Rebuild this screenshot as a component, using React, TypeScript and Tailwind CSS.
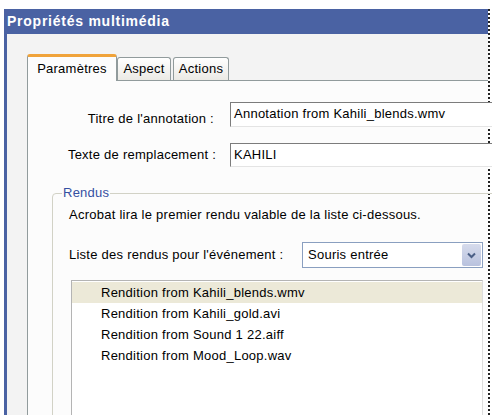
import React from "react";

const font = { fontFamily: "Tahoma, 'Liberation Sans', Arial, sans-serif" };

const renditions = [
  "Rendition from Kahili_blends.wmv",
  "Rendition from Kahili_gold.avi",
  "Rendition from Sound 1 22.aiff",
  "Rendition from Mood_Loop.wav",
];

export default function App() {
  return (
    <div className="w-[492px] h-[415px] bg-white overflow-hidden pt-[9px] pl-[4px] text-[13px] tracking-[0.25px] text-black" style={font}>
      <div className="w-[486px] h-[406px] flex flex-col border-r-2 border-dotted border-[#222]">
        {/* barre de titre */}
        <div className="h-[25px] shrink-0 bg-[#4a62a3] text-white font-bold text-[14px] tracking-[0.75px] flex items-center pl-[3px]">
          Propriétés multimédia
        </div>

        <div className="flex-1 min-h-0 flex flex-col border-l-[3px] border-[#4a62a3] bg-[#f3f3f3] pl-[20px] pt-[20px]">
          {/* onglets */}
          <div className="h-[26px] shrink-0 flex items-end">
            <div className="relative top-[1px] z-10 w-[90px] h-[27px] bg-[#fcfcfc] border-x border-[#919b9c] border-t-[3px] border-t-[#f0a33a] rounded-t-[3px] flex items-center justify-center">
              Paramètres
            </div>
            <div className="w-[54px] h-[23px] bg-gradient-to-b from-white to-[#ebeae5] border border-b-0 border-[#919b9c] rounded-t-[3px] flex items-center justify-center">
              Aspect
            </div>
            <div className="ml-[2px] w-[56px] h-[23px] bg-gradient-to-b from-white to-[#ebeae5] border border-b-0 border-[#919b9c] rounded-t-[3px] flex items-center justify-center">
              Actions
            </div>
          </div>

          {/* page */}
          <div className="flex-1 min-h-0 border-t border-l border-[#919b9c] bg-[#fcfcfc] pt-[21px]">
            <div className="flex items-end h-[25px]">
              <span className="w-[186px] shrink-0 text-right leading-[16px]">Titre de l'annotation :</span>
              <div className="ml-[16px] w-[300px] shrink-0 h-[25px] bg-white border border-[#7c7c7c] border-r-[#d8d8d8] border-b-[#e4e4e4] flex items-center pl-[3px] pb-[2px]">
                Annotation from Kahili_blends.wmv
              </div>
            </div>
            <div className="mt-[16px] flex items-center h-[24px]">
              <span className="w-[188px] shrink-0 text-right">Texte de remplacement :</span>
              <div className="ml-[14px] w-[300px] shrink-0 h-[24px] bg-white border border-[#7c7c7c] border-r-[#d8d8d8] border-b-[#e4e4e4] flex items-center pl-[3px]">
                KAHILI
              </div>
            </div>

            <fieldset className="mt-[18px] ml-[24px] w-[480px] h-[300px] border border-[#d2d2c6] rounded-tl-[4px] pl-[16px] pt-[6px]">
              <legend className="-ml-[7px] px-[1px] text-[#3550a2] leading-[16px]">Rendus</legend>
              <div className="leading-[16px]">Acrobat lira le premier rendu valable de la liste ci-dessous.</div>
              <div className="mt-[19px] flex items-center">
                <span className="w-[233px] shrink-0">Liste des rendus pour l'événement :</span>
                <div className="w-[181px] shrink-0 h-[26px] bg-white border border-[#8a9fc0] flex items-center">
                  <span className="flex-1 pl-[5px]">Souris entrée</span>
                  <div className="w-[19px] h-[22px] mr-[1px] bg-gradient-to-b from-[#d6dbec] to-[#b9c2de] rounded-[2px] flex items-center justify-center">
                    <svg width="9" height="7" viewBox="0 0 9 7">
                      <path d="M1 1.5 L4.5 5 L8 1.5" fill="none" stroke="#4b5f86" strokeWidth="2" />
                    </svg>
                  </div>
                </div>
              </div>
              <div className="mt-[12px] ml-[2px] w-[412px] h-[200px] bg-white border border-[#b4b4b4] border-r-[#dcdcdc] pt-px">
                {renditions.map((r, i) => (
                  <div key={r} className={`h-[21px] flex items-center pl-[29px] ${i === 0 ? "bg-[#ece9d8]" : ""}`}>
                    {r}
                  </div>
                ))}
              </div>
            </fieldset>
          </div>
        </div>
      </div>
    </div>
  );
}
